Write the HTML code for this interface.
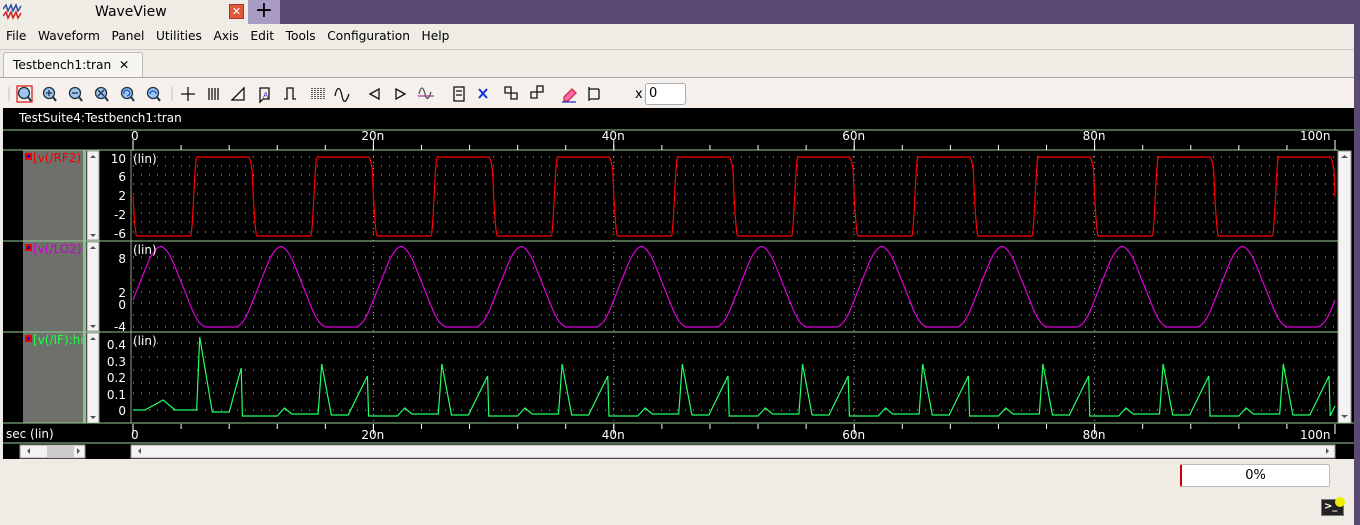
<!DOCTYPE html>
<html><head><meta charset="utf-8"><style>
*{margin:0;padding:0;box-sizing:border-box}
body{width:1360px;height:525px;overflow:hidden;background:#efece6;font-family:"DejaVu Sans","Liberation Sans",sans-serif;font-size:13px;color:#000;position:relative}
.abs{position:absolute}
</style></head><body>
<div class="abs" style="left:0;top:0;width:1360px;height:24px;background:#5a4a72"></div>
<div class="abs" style="left:0;top:0;width:248px;height:24px;background:#efece6"></div>
<div class="abs" style="left:95px;top:4px;font-size:14px">WaveView</div>
<div class="abs" style="left:229px;top:4px;width:15px;height:15px;background:#e05a3a;border:1px solid #a33;color:#fff;font-size:11px;line-height:13px;text-align:center;font-weight:bold">✕</div>
<div class="abs" style="left:248px;top:0;width:32px;height:24px;background:#a89cc4;font-size:22px;line-height:22px;text-align:center">+</div>
<svg class="abs" style="left:3px;top:3px" width="20" height="18"><path d="M0 6 L3 2 L5 8 L8 2 L10 8 L13 2 L15 8 L18 3" stroke="#2a4fa0" fill="none" stroke-width="1.5"/><path d="M0 13 L3 9 L5 15 L8 9 L10 15 L13 9 L15 15 L18 10" stroke="#d02020" fill="none" stroke-width="1.5"/></svg>
<div class="abs" style="left:1354px;top:0;width:6px;height:525px;background:#5a4a72"></div>
<div class="abs" style="left:6px;top:29px;font-size:12.2px;white-space:nowrap">File&nbsp;&nbsp; Waveform&nbsp;&nbsp; Panel&nbsp;&nbsp; Utilities&nbsp;&nbsp; Axis&nbsp;&nbsp; Edit&nbsp;&nbsp; Tools&nbsp;&nbsp; Configuration&nbsp;&nbsp; Help</div>
<div class="abs" style="left:0;top:49px;width:1354px;height:1px;background:#cfccc6"></div>
<div class="abs" style="left:3px;top:52px;width:140px;height:27px;background:#f7f5f0;border:1px solid #bbb;border-bottom:none;border-radius:3px 3px 0 0"></div>
<div class="abs" style="left:13px;top:58px;font-size:12.2px">Testbench1:tran&nbsp; ✕</div>
<div class="abs" style="left:0;top:77px;width:1354px;height:31px;background:#f6f0ec;border-top:1px solid #aaa"></div>
<svg class="abs" style="left:0;top:80px" width="700" height="28">
<g fill="none" stroke-width="1.3">
<rect x="17" y="6" width="15" height="16" stroke="#e02020"/>
<g stroke="#234"><circle cx="24" cy="13" r="5.5" fill="#9cc4ee"/><line x1="28" y1="17" x2="31" y2="21" stroke-width="2"/>
<circle cx="49" cy="13" r="5.5" fill="#9cc4ee"/><line x1="53" y1="17" x2="56" y2="21" stroke-width="2"/><path d="M46 13h6M49 10v6"/>
<circle cx="75" cy="13" r="5.5" fill="#9cc4ee"/><line x1="79" y1="17" x2="82" y2="21" stroke-width="2"/><path d="M72 13h6"/>
<circle cx="101" cy="13" r="5.5" fill="#9cc4ee"/><line x1="105" y1="17" x2="108" y2="21" stroke-width="2"/><path d="M98 10l6 6M104 10l-6 6"/>
<circle cx="127" cy="13" r="5.5" fill="#9cc4ee"/><line x1="131" y1="17" x2="134" y2="21" stroke-width="2"/><path d="M124 14a3 3 0 1 1 3 2" stroke="#15c"/>
<circle cx="153" cy="13" r="5.5" fill="#9cc4ee"/><line x1="157" y1="17" x2="160" y2="21" stroke-width="2"/><path d="M150 14a3 3 0 1 1 6 0" stroke="#15c"/></g>
<line x1="9" y1="7" x2="9" y2="21" stroke="#ccc"/><line x1="172" y1="7" x2="172" y2="21" stroke="#ccc"/>
<g stroke="#111"><path d="M181 14h14M188 7v14"/><path d="M209 8v12M212 8v12M215 8v12M218 8v12"/>
<path d="M232 20h12v-12zM235 17l6-6"/><path d="M260 8h9v11h-6l-3 3z"/><path d="M284 19h3v-11h6v11h3"/>
<path d="M312 8v12M315 8v12M318 8v12M321 8v12M324 8v12" stroke-dasharray="1 1"/>
<path d="M335 16c2-10 5-10 7 0s5 4 7-2"/>
<path d="M370 14l9-5v10z"/><path d="M405 14l-9-5v10z"/>
<path d="M454 7h10v14h-10zM456 11h6M456 15h6"/><path d="M505 7h6v6h-6zM511 13h6v6h-6z"/><path d="M531 12h6v6h-6zM537 6h6v6h-6z"/>
<path d="M589 7v14M589 9h10M589 19h10M599 9v10"/></g>
<path d="M419 14c2-8 4-8 6 0s4 4 6-2" stroke="#555"/><path d="M418 16h16" stroke="#a4a"/>
<path d="M479 9l8 9M487 9l-8 9" stroke="#1030e0" stroke-width="2"/>
<path d="M564 17l8-8 4 4-8 8h-4z" stroke="#c33" fill="#f6b"/><path d="M562 22h14" stroke="#33c"/>
</g>
<text x="263" y="18" font-size="8" fill="#33c" font-family="Liberation Sans">A</text>
</svg>
<div class="abs" style="left:635px;top:87px">x</div>
<div class="abs" style="left:645px;top:83px;width:41px;height:22px;background:#fff;border:1px solid #aaa;border-radius:3px;padding:2px 3px">0</div>
<svg class="abs" style="left:0;top:106px" width="1354" height="354" id="w" font-family="DejaVu Sans, Liberation Sans, sans-serif" font-size="12">
<rect x="3" y="2" width="1351" height="351" fill="#000"/>
<text x="19" y="16" fill="#fff">TestSuite4:Testbench1:tran</text>
<line x1="3" y1="24" x2="1354" y2="24" stroke="#9c9"/>
<rect x="23" y="44" width="60" height="273" fill="#6e706b"/>
<rect x="83" y="44" width="3" height="273" fill="#8fc08f"/>
<g fill="#f4f2f2" stroke="#999"><rect x="87" y="45" width="12" height="89"/><rect x="87" y="136" width="12" height="89"/><rect x="87" y="227" width="12" height="90"/><rect x="1338" y="45" width="13" height="272"/></g>
<g fill="#555"><path d="M90 52h6l-3-3zM90 128h6l-3 3zM90 143h6l-3-3zM90 219h6l-3 3zM90 234h6l-3-3zM90 310h6l-3 3zM1341 52h7l-3.5-3zM1341 309h7l-3.5 3z"/></g>
<g stroke="#9c9"><line x1="3" y1="44" x2="1338" y2="44"/><line x1="3" y1="135" x2="1338" y2="135"/><line x1="3" y1="226" x2="1338" y2="226"/><line x1="3" y1="317" x2="1354" y2="317"/><line x1="3" y1="337" x2="1354" y2="337"/><line x1="131" y1="44" x2="131" y2="317" stroke="#8a8"/></g>
<g id="grid"></g>
<g fill="#fff" id="ax"></g>
<g id="wv" fill="none" stroke-width="1.2"></g>
<g font-size="12">
<rect x="25" y="47" width="7" height="7" fill="#e00"/><rect x="27" y="49" width="3" height="3" fill="#00f"/><text x="33" y="56" fill="#e00">[v(/RF2)</text>
<rect x="25" y="138" width="7" height="7" fill="#e00"/><rect x="27" y="140" width="3" height="3" fill="#00f"/><text x="33" y="147" fill="#c0c">[v(/LO2)</text>
<rect x="25" y="229" width="7" height="7" fill="#e00"/><rect x="27" y="231" width="3" height="3" fill="#00f"/><text x="33" y="238" fill="#2f4">[v(/IF):hi</text>
</g>
<g fill="#fff"><text x="133" y="57">(lin)</text><text x="133" y="148">(lin)</text><text x="133" y="239">(lin)</text><text x="6" y="332">sec (lin)</text></g>
<g fill="#fff" text-anchor="end">
<text x="126" y="57">10</text><text x="126" y="75">6</text><text x="126" y="94">2</text><text x="126" y="113">-2</text><text x="126" y="132">-6</text>
<text x="126" y="157">8</text><text x="126" y="191">2</text><text x="126" y="203">0</text><text x="126" y="225">-4</text>
<text x="126" y="243">0.4</text><text x="126" y="260">0.3</text><text x="126" y="276">0.2</text><text x="126" y="293">0.1</text><text x="126" y="309">0</text></g>
<rect x="20" y="339" width="65" height="13" fill="#f4f2f2" stroke="#999"/><rect x="47" y="340" width="27" height="11" fill="#ccc"/>
<rect x="131" y="339" width="1204" height="13" fill="#f4f2f2" stroke="#999"/>
<path d="M27 345l3-3v6zM80 345l-3-3v6zM138 345l3-3v6zM1329 345l-3-3v6z" fill="#555"/>
</svg>
<div class="abs" style="left:1180px;top:464px;width:150px;height:23px;background:#fff;border:1px solid #bbb;border-left:2px solid #c00;border-radius:2px;text-align:center;line-height:21px">0%</div>
<div class="abs" style="left:1321px;top:499px;width:23px;height:17px;background:#222;border:1px solid #777;color:#fff;font-size:10px;line-height:14px;padding-left:2px;font-weight:bold">&gt;_</div>
<div class="abs" style="left:1335px;top:497px;width:10px;height:10px;border-radius:50%;background:#ee0"></div>
<script>
const NS='http://www.w3.org/2000/svg';
const X=t=>133+t*12.02;
function el(g,tag,a){const e=document.createElementNS(NS,tag);for(const k in a)e.setAttribute(k,a[k]);document.getElementById(g).appendChild(e);return e;}
const rows=[51,60,69,78,88,97,107,116,126,151,162,174,186,197,209,221,237,251,264,277,287,304];
rows.forEach(y=>el('grid','line',{x1:133,x2:1337,y1:y,y2:y,stroke:'#bbb','stroke-dasharray':'1 7','stroke-width':1}));
[20,40,60,80].forEach(t=>el('grid','line',{x1:X(t),x2:X(t),y1:44,y2:317,stroke:'#bbb','stroke-dasharray':'1 5'}));
for(let t=0;t<=100;t+=4){el('ax','line',{x1:X(t),x2:X(t),y1:39,y2:44,stroke:'#fff'});el('ax','line',{x1:X(t),x2:X(t),y1:318,y2:323,stroke:'#fff'});}
for(let t=0;t<=100;t+=20){const lbl=t?t+'n':'0';el('ax','line',{x1:X(t),x2:X(t),y1:34,y2:44,stroke:'#fff'});el('ax','line',{x1:X(t),x2:X(t),y1:318,y2:328,stroke:'#fff'});
const a={x:X(t)+(t==100?-35:t==0?-2:-12),y:34,fill:'#fff'};el('ax','text',a).textContent=lbl;a.y=333;el('ax','text',a).textContent=lbl;}
let r='',p='',g='';
const sm=(x)=>x<0?0:x>1?1:x*x*(3-2*x);
function trap(t){let q=(((t-2.3)%10)+10)%10; if(q>5)q=10-q; // 0..5
 if(q<0.5)return 1; if(q<3.2)return 1-2*(q-0.5)/2.7; return -1;}
function lo(t){let s=0,n=0;for(let d=-0.6;d<=0.6;d+=0.1){s+=trap(t+d);n++;}return s/n;}
for(let i=0;i<=1200;i++){const t=i/12;const x=X(t).toFixed(1);
 let ph=((t%10)+10)%10;
 let v;
 if(ph<0.3)v=1-sm(ph/0.3*0.5+0.5);else if(ph<4.8)v=0;else if(ph<5.3)v=sm((ph-4.8)/0.5);else if(ph<9.6)v=1;else v=1-sm((ph-9.6)/0.6*0.5);
 r+=(i?'L':'M')+x+' '+(130-79*v).toFixed(1)+' ';
 let u=lo(t);
 p+=(i?'L':'M')+x+' '+(180.5-40.5*u).toFixed(1)+' ';
}
const pts=[[0,304],[1.0,304],[2.5,294],[3.5,304],[5.3,304],[5.55,231],[6.6,306],[8.0,306],[9.0,262],[9.1,310]];
for(let k=1;k<10;k++){const b=10*k;pts.push([b-0.3,310],[b+2.0,310],[b+2.6,302],[b+3.2,308],[b+5.4,308],[b+5.7,258],[b+6.5,309],[b+7.9,309],[b+9.5,270],[b+9.6,310]);}
pts.push([100,300]);
g=pts.map((q,i)=>(i?'L':'M')+X(q[0]).toFixed(1)+' '+q[1]).join(' ');
el('wv','path',{d:r,stroke:'#f00'});el('wv','path',{d:p,stroke:'#d0d'});el('wv','path',{d:g,stroke:'#2f6'});
</script>
</body></html>
